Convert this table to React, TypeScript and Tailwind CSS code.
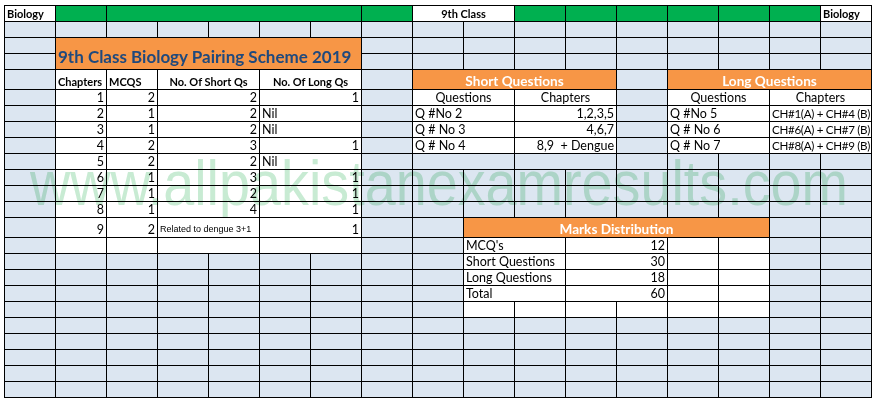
import React from "react";

type Align = "l" | "r" | "c";

const BG = {
  w: "bg-white",
  b: "bg-[#dce6f1]",
  g: "bg-[#00b050]",
  o: "bg-[#f79646]",
};

const SPAN: Record<number, string> = {
  1: "",
  2: "col-span-2",
  4: "col-span-4",
  5: "col-span-5",
  6: "col-span-6",
};

const ALIGN: Record<Align, string> = {
  l: "justify-start",
  r: "justify-end",
  c: "justify-center",
};

type CellDef = {
  bg: keyof typeof BG;
  span?: number;
  text?: string;
  align?: Align;
  kind?: "body" | "bold" | "head" | "title" | "small" | "tight";
  rows?: number;
};

const KIND = {
  body: "text-[12.5px] leading-[15px] text-black",
  tight: "text-[11.6px] leading-[15px] tracking-[-0.3px] text-black",
  bold: "text-[11px] leading-[15px] font-bold text-black",
  head: "text-[13.6px] leading-[15px] font-bold text-white",
  title: "text-[17px] leading-[20px] font-bold text-[#1f497d] pb-[2px]",
  small: "text-[9px] leading-[15px] font-['Liberation_Sans',Arial,sans-serif] text-black",
};

function Cell({ c }: { c: CellDef }) {
  return (
    <div
      className={[
        "flex items-end overflow-hidden whitespace-pre px-[2px]",
        BG[c.bg],
        SPAN[c.span ?? 1],
        c.rows === 2 ? "row-span-2" : "",
        ALIGN[c.align ?? "l"],
        KIND[c.kind ?? "body"],
      ].join(" ")}
    >
      {c.text}
    </div>
  );
}

const b = (n: number): CellDef[] => Array.from({ length: n }, () => ({ bg: "b" }));
const g = (n: number): CellDef[] => Array.from({ length: n }, () => ({ bg: "g" }));
const w = (n: number): CellDef[] => Array.from({ length: n }, () => ({ bg: "w" }));

const t = (text: string, align: Align = "l", span = 1, kind: CellDef["kind"] = "body"): CellDef => ({
  bg: "w",
  text,
  align,
  span,
  kind,
});

const leftRow = (ch: string, mcq: string, sq: string, lq: string, lqAlign: Align = "r"): CellDef[] => [
  { bg: "b" },
  t(ch, "r"),
  t(mcq, "r"),
  t(sq, "r", 2),
  t(lq, lqAlign, 2),
];

const cells: CellDef[] = [
  // row 1
  t("Biology", "l", 1, "bold"),
  ...g(1),
  { bg: "g", span: 5 },
  ...g(1),
  t("9th Class", "c", 2, "bold"),
  ...g(6),
  t("Biology", "l", 1, "bold"),
  // row 2
  ...b(17),
  // row 3
  ...b(1),
  { bg: "o", span: 6, rows: 2, text: "9th Class Biology Pairing Scheme 2019", kind: "title" },
  ...b(10),
  // row 4
  ...b(11),
  // row 5
  ...b(1),
  t("Chapters", "l", 1, "bold"),
  t("MCQS", "l", 1, "bold"),
  t("No. Of Short Qs", "c", 2, "bold"),
  t("No. Of Long Qs", "c", 2, "bold"),
  ...b(1),
  { bg: "o", span: 4, text: "Short Questions", align: "c", kind: "head" },
  ...b(1),
  { bg: "o", span: 4, text: "Long Questions", align: "c", kind: "head" },
  // row 6
  ...leftRow("1", "2", "2", "1"),
  ...b(1),
  t("Questions", "c", 2),
  t("Chapters", "c", 2),
  ...b(1),
  t("Questions", "c", 2),
  t("Chapters", "c", 2),
  // row 7
  ...leftRow("2", "1", "2", "Nil", "l"),
  ...b(1),
  t("Q #No 2", "l", 2),
  t("1,2,3,5", "r", 2),
  ...b(1),
  t("Q #No 5", "l", 2),
  t("CH#1(A) + CH#4 (B)", "l", 2, "tight"),
  // row 8
  ...leftRow("3", "1", "2", "Nil", "l"),
  ...b(1),
  t("Q # No 3", "l", 2),
  t("4,6,7", "r", 2),
  ...b(1),
  t("Q # No 6", "l", 2),
  t("CH#6(A) + CH#7 (B)", "l", 2, "tight"),
  // row 9
  ...leftRow("4", "2", "3", "1"),
  ...b(1),
  t("Q # No 4", "l", 2),
  t("8,9  + Dengue", "r", 2),
  ...b(1),
  t("Q # No 7", "l", 2),
  t("CH#8(A) + CH#9 (B)", "l", 2, "tight"),
  // row 10
  ...leftRow("5", "2", "2", "Nil", "l"),
  ...b(1),
  { bg: "b", span: 2 },
  { bg: "b", span: 2 },
  ...b(5),
  // row 11-13
  ...leftRow("6", "1", "3", "1"),
  ...b(10),
  ...leftRow("7", "1", "2", "1"),
  ...b(10),
  ...leftRow("8", "1", "4", "1"),
  ...b(10),
  // row 14
  ...b(1),
  t("9", "r"),
  t("2", "r"),
  t("Related to dengue 3+1", "l", 2, "small"),
  t("1", "r", 2),
  ...b(2),
  { bg: "o", span: 6, text: "Marks Distribution", align: "c", kind: "head" },
  ...b(2),
  // row 15
  ...b(1),
  ...w(2),
  { bg: "w", span: 2 },
  { bg: "w", span: 2 },
  ...b(2),
  t("MCQ's", "l", 2),
  t("12", "r", 2),
  ...w(2),
  ...b(2),
  // row 16
  ...b(9),
  t("Short Questions", "l", 2),
  t("30", "r", 2),
  ...w(2),
  ...b(2),
  // row 17
  ...b(9),
  t("Long Questions", "l", 2),
  t("18", "r", 2),
  ...w(2),
  ...b(2),
  // row 18
  ...b(9),
  t("Total", "l", 2),
  t("60", "r", 2),
  ...w(2),
  ...b(2),
  // row 19
  ...b(9),
  ...w(6),
  ...b(2),
  // rows 20-24
  ...b(17 * 5),
];

export default function App() {
  return (
    <div className="relative w-[877px] h-[402px] bg-white overflow-hidden font-['Lato',sans-serif]">
      <div className="pt-[5px] pl-[4px]">
        <div className="grid w-max grid-cols-[repeat(17,50px)] grid-rows-[repeat(4,15px)_19px_repeat(8,15px)_19px_repeat(10,15px)] gap-px bg-black p-px">
          {cells.map((c, i) => (
            <Cell key={i} c={c} />
          ))}
        </div>
      </div>
      <div className="pointer-events-none absolute left-[30px] top-[152px] origin-left scale-x-[0.885] whitespace-nowrap text-[63px] leading-[63px] text-[#c8ebd3] mix-blend-multiply font-['Liberation_Sans',Arial,sans-serif]">
        www.allpakistanexamresults.com
      </div>
    </div>
  );
}
